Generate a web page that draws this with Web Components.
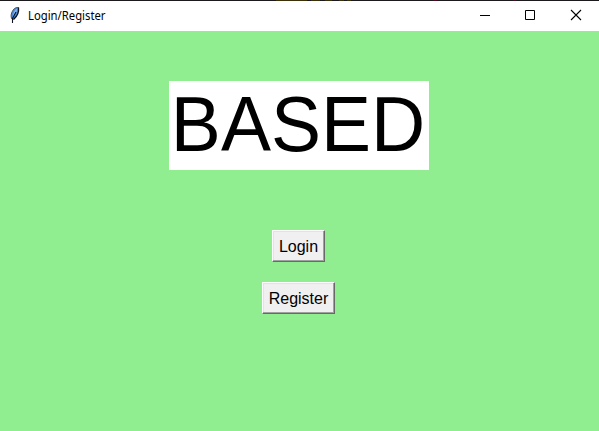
<!DOCTYPE html>
<html lang="en">
<head>
<meta charset="utf-8">
<title>Login/Register</title>
<style>
html, body { margin: 0; height: 100%; overflow: hidden; }
</style>
</head>
<body>
<app-window>
  <title-bar slot="bar">Login/Register</title-bar>
  <banner-label>BASED</banner-label>
  <push-button class="first" style="--width:53px">Login</push-button>
  <push-button style="--width:73px">Register</push-button>
</app-window>
<script>
class Base extends HTMLElement {
  constructor() {
    super();
    this.attachShadow({ mode: "open" }).innerHTML = this.constructor.markup;
  }
}

class AppWindow extends Base {
  static markup = `
    <style>
      :host { display: flex; flex-direction: column; width: 599px; height: 431px; background: #90ee90; }
      main { flex: 1; display: flex; flex-direction: column; align-items: center; padding-top: 50px; padding-right: 1px; }
      ::slotted(push-button) { margin: 20px 1px 0 0; }
      ::slotted(push-button.first) { margin-top: 60px; }
    </style>
    <slot name="bar"></slot>
    <main><slot></slot></main>`;
}

class TitleBar extends Base {
  static markup = `
    <style>
      :host { display: flex; flex-direction: column; height: 31px; flex: none;
        background: #fff; color: #000; font: 12px/30px "Noto Sans", "Open Sans", sans-serif; }
      .edge { height: 1px; background: linear-gradient(90deg, transparent 276px, #3b3009 276px 307px, transparent 307px 311px, #3b3009 311px 320px, transparent 320px 325px, #3b3009 325px 332px, transparent 332px 339px, #3b3009 339px 344px, transparent 344px 347px, #3b3009 347px 351px, transparent 351px 433px, #4a0c25 433px 437px, transparent 437px 513px, #4a0c25 513px 516px, transparent 516px), #1b191b; }
      .row { display: flex; height: 30px; }
      .icon { margin: 4px 5px 0 7px; flex: none; }
      .text { flex: 1; white-space: nowrap; }
      .text span { display: inline-block; transform: scaleX(.94); transform-origin: 0 50%; }
      .ctl { width: 45px; height: 30px; flex: none; }
      .ctls { display: flex; margin-right: 1px; }
      svg { display: block; }
    </style>
    <div class="edge"></div>
    <div class="row">
      <svg class="icon" width="16" height="20" viewBox="7 5 16 20">
        <path d="M12.500 19.500C10 16.500 11 12 14 9C15.500 7.500 17 7 18.700 7.200C19 11 17.500 16 14 19.500Z" fill="#4c8ddd"/>
        <path d="M13 16.500C13 13 14.500 10 17 8.500C17 12 15.500 14.500 13 16.500Z" fill="#86b8f0"/>
        <path d="M12 19C10.200 16.500 11.200 12 14.200 8.800C15.500 7.700 17 7.400 18.500 7.500" fill="none" stroke="#4b4f5c"/>
        <path d="M18.500 7.500C19 11 17.500 16 13.500 19.500" fill="none" stroke="#10131c" stroke-width="1.300"/>
        <path d="M12.500 23V18.500L16 12" fill="none" stroke="#10131c" stroke-width="1.100"/>
      </svg>
      <div class="text"><span><slot></slot></span></div>
      <div class="ctls">
        <svg class="ctl" viewBox="0 0 45 30"><path d="M17 14.500H27" stroke="#000"/></svg>
        <svg class="ctl" viewBox="0 0 45 30"><path d="M17.500 9.500H26.500V18.500H17.500Z" fill="none" stroke="#000"/></svg>
        <svg class="ctl" viewBox="0 0 45 30"><path d="M18 9L28 19M28 9L18 19" stroke="#000" stroke-width="1.100"/></svg>
      </div>
    </div>`;
}

class BannerLabel extends Base {
  static markup = `
    <style>
      :host { display: block; box-sizing: border-box; width: 260px; height: 89px; background: #fff; color: #000;
        font: 75px/87px "Liberation Sans", Arial, sans-serif; text-align: center; white-space: nowrap; }
      span { display: block; transform: translate(-1px, 1px) scaleY(1.045); transform-origin: 0 69px; }
    </style>
    <span><slot></slot></span>`;
}

class PushButton extends Base {
  static markup = `
    <style>
      :host { display: block; }
      button { display: flex; justify-content: center; box-sizing: border-box; width: var(--width, auto); height: 32px; margin: 0; padding: 0; background: #f0f0f0; color: #000;
        border: 1px solid; border-color: #fff #696969 #696969 #fff; border-radius: 0;
        box-shadow: inset -1px -1px #a0a0a0, inset 1px 1px #e3e3e3;
        font: 16px/30px "Liberation Sans", Arial, sans-serif; white-space: nowrap; }
      span { transform: translateY(1px) scaleY(1.05); transform-origin: 0 20px; }
    </style>
    <button type="button"><span><slot></slot></span></button>`;
}

customElements.define("app-window", AppWindow);
customElements.define("title-bar", TitleBar);
customElements.define("banner-label", BannerLabel);
customElements.define("push-button", PushButton);
</script>
</body>
</html>
